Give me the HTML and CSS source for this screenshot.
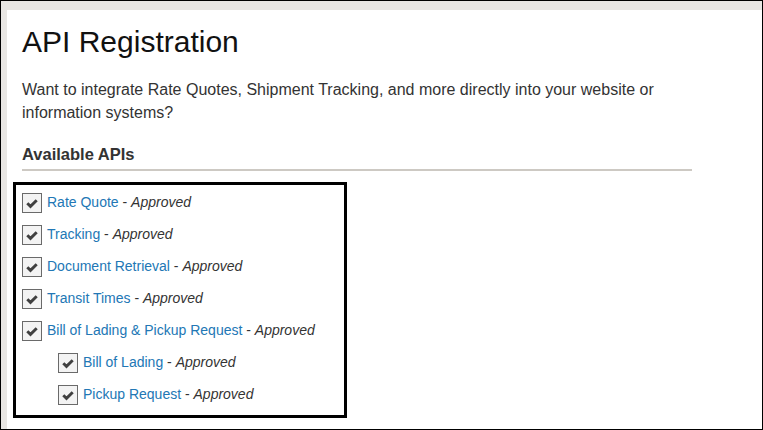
FILE: index.html
```html
<!DOCTYPE html>
<html lang="en">
<head>
<meta charset="utf-8">
<title>API Registration</title>
<link rel="stylesheet" href="styles.css">
</head>
<body>
<div class="frame">
  <main class="panel">
    <h1 class="title">API Registration</h1>
    <p class="intro">Want to integrate Rate Quotes, Shipment Tracking, and more directly into your website or information systems?</p>
    <h2 class="section">Available APIs</h2>
    <ul class="apis">
      <li class="api"><span class="check"><svg viewBox="0 0 20 20" width="20" height="20"><path d="M5.3 10.2 L8.5 13.4 L14.7 7.2"/></svg></span><span class="label"><a class="name" href="#">Rate Quote</a> - <em class="status">Approved</em></span></li>
      <li class="api"><span class="check"><svg viewBox="0 0 20 20" width="20" height="20"><path d="M5.3 10.2 L8.5 13.4 L14.7 7.2"/></svg></span><span class="label"><a class="name" href="#">Tracking</a> - <em class="status">Approved</em></span></li>
      <li class="api"><span class="check"><svg viewBox="0 0 20 20" width="20" height="20"><path d="M5.3 10.2 L8.5 13.4 L14.7 7.2"/></svg></span><span class="label"><a class="name" href="#">Document Retrieval</a> - <em class="status">Approved</em></span></li>
      <li class="api"><span class="check"><svg viewBox="0 0 20 20" width="20" height="20"><path d="M5.3 10.2 L8.5 13.4 L14.7 7.2"/></svg></span><span class="label"><a class="name" href="#">Transit Times</a> - <em class="status">Approved</em></span></li>
      <li class="api"><span class="check"><svg viewBox="0 0 20 20" width="20" height="20"><path d="M5.3 10.2 L8.5 13.4 L14.7 7.2"/></svg></span><span class="label"><a class="name" href="#">Bill of Lading &amp; Pickup Request</a> - <em class="status">Approved</em></span></li>
      <li class="api sub"><span class="check"><svg viewBox="0 0 20 20" width="20" height="20"><path d="M5.3 10.2 L8.5 13.4 L14.7 7.2"/></svg></span><span class="label"><a class="name" href="#">Bill of Lading</a> - <em class="status">Approved</em></span></li>
      <li class="api sub"><span class="check"><svg viewBox="0 0 20 20" width="20" height="20"><path d="M5.3 10.2 L8.5 13.4 L14.7 7.2"/></svg></span><span class="label"><a class="name" href="#">Pickup Request</a> - <em class="status">Approved</em></span></li>
    </ul>
  </main>
</div>
</body>
</html>
```

FILE: styles.css
```css
html, body {
  margin: 0;
  padding: 0;
  height: 100%;
}

body {
  font-family: "Liberation Sans", Arial, sans-serif;
  color: #333;
  background: #fff;
}

.frame {
  box-sizing: border-box;
  width: 763px;
  height: 430px;
  border: 1px solid #000;
  background: #e8e6e3;
  padding: 9px 0 0 6px;
  display: flex;
}

.panel {
  flex: 1;
  background: #fff;
  padding: 15px 0 0 15px;
}

.title {
  margin: 0;
  font-size: 30px;
  line-height: 34px;
  font-weight: normal;
  color: #111;
}

.intro {
  margin: 19px 0 0;
  width: 660px;
  font-size: 16px;
  line-height: 23px;
  color: #333;
}

.section {
  margin: 20px 0 0;
  width: 670px;
  font-size: 16.5px;
  line-height: 20px;
  font-weight: bold;
  color: #333;
  padding-bottom: 5px;
  border-bottom: 2px solid #cdc9c3;
}

.apis {
  list-style: none;
  box-sizing: border-box;
  width: 334px;
  height: 236px;
  margin: 11px 0 0 -9px;
  padding: 8px 6px 0;
  border: 3px solid #000;
  display: flex;
  flex-direction: column;
  gap: 12px;
}

.api {
  display: flex;
  align-items: center;
  height: 20px;
  font-size: 14px;
}

.api.sub {
  margin-left: 36px;
}

.check {
  box-sizing: border-box;
  width: 20px;
  height: 20px;
  border: 1px solid #6a6a6a;
  background: #f3f3f3;
  margin-right: 5px;
  display: flex;
  flex: none;
}

.check svg {
  display: block;
  margin: -1px;
}

.check path {
  fill: none;
  stroke: #404040;
  stroke-width: 2.9;
  stroke-linecap: butt;
  stroke-linejoin: miter;
}

.label {
  white-space: nowrap;
  margin-bottom: 2px;
  color: #333;
}

.name {
  color: #2277b5;
  text-decoration: none;
}

.status {
  color: #333;
  font-style: italic;
}
```
